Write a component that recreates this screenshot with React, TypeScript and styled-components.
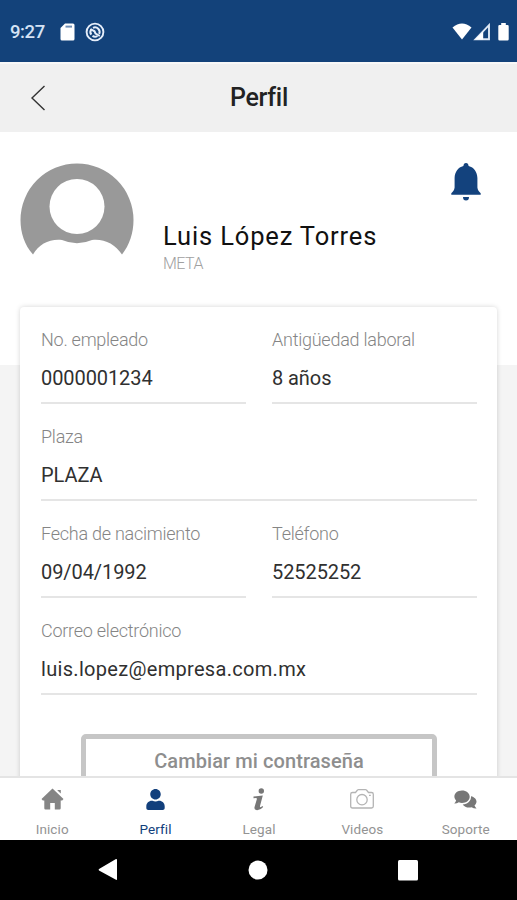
import React from "react";
import styled, { createGlobalStyle } from "styled-components";
import { FaUser } from "react-icons/fa";

const GlobalStyle = createGlobalStyle`
  * { box-sizing: border-box; }
  body { margin: 0; background: #fff; font-family: Roboto, "Liberation Sans", sans-serif; }
`;

const Screen = styled.div`
  width: 517px;
  height: 900px;
  display: flex;
  flex-direction: column;
  overflow: hidden;
  background: #fff;
`;

const StatusBar = styled.header`
  height: 62px;
  flex: none;
  display: flex;
  justify-content: space-between;
  align-items: center;
  padding: 1px 8px 0 10px;
  background: #13427a;
  color: #fff;
`;

const StatusGroup = styled.div`
  display: flex;
  align-items: center;
`;

const Clock = styled.span`
  width: 50px;
  font-size: 18.5px;
  font-weight: 500;
  letter-spacing: -0.4px;
  color: #d5e2f5;
`;

const TitleBar = styled.div`
  height: 70px;
  flex: none;
  display: grid;
  grid-template-columns: 100px 1fr 100px;
  align-items: center;
  background: #f0f0f0;
  border-top: 2px solid #f8f8f8;
`;

const BackButton = styled.button`
  display: flex;
  padding: 0 0 1px 30px;
  border: 0;
  background: none;
`;

const Title = styled.h1`
  margin: 0;
  padding-left: 1px;
  text-align: center;
  font-size: 25px;
  line-height: 30px;
  font-weight: 500;
  letter-spacing: -0.3px;
  color: #222;
`;

const Content = styled.main`
  height: 644px;
  flex: none;
  overflow: hidden;
  background: linear-gradient(#fff 233px, #f4f4f4 233px);
`;

const Identity = styled.section`
  height: 175px;
  display: grid;
  grid-template-columns: 143px 1fr auto;
  padding: 31px 36px 0 20px;
`;

const Person = styled.div`
  padding-top: 58px;
`;

const Name = styled.h2`
  margin: 0;
  font-size: 25.5px;
  line-height: 30px;
  font-weight: 400;
  letter-spacing: 0.85px;
  color: #111;
  white-space: nowrap;
`;

const Role = styled.p`
  margin: 3px 0 0;
  font-size: 16px;
  line-height: 20px;
  font-weight: 300;
  letter-spacing: -0.5px;
  color: #a0a0a0;
`;

const Card = styled.section`
  height: 520px;
  margin: 0 20px;
  padding: 19px 20px 0 21px;
  background: #fff;
  border-radius: 4px;
  box-shadow: 0 0 5px rgba(0, 0, 0, 0.17);
`;

const Fields = styled.div`
  display: grid;
  grid-template-columns: 205px 205px;
  justify-content: space-between;
`;

const Field = styled.div<{ $wide?: boolean }>`
  grid-column: ${({ $wide }) => ($wide ? "1 / -1" : "auto")};
  height: 78px;
  margin-bottom: 19px;
  border-bottom: 2px solid #e5e5e5;
`;

const Label = styled.div`
  padding-top: 2px;
  font-size: 18px;
  line-height: 24px;
  font-weight: 300;
  letter-spacing: -0.25px;
  color: #858585;
`;

const Value = styled.div<{ $spacing?: number }>`
  padding-top: 12px;
  font-size: 20px;
  line-height: 28px;
  letter-spacing: ${({ $spacing = -0.08 }) => $spacing}px;
  color: #303030;
`;

const PasswordButton = styled.button`
  display: block;
  width: 356px;
  height: 60px;
  margin: 20px 0 0 40px;
  padding: 0 0 7px;
  border: 5px solid #c6c6c6;
  border-radius: 5px;
  background: #fff;
  font: 500 20px Roboto, sans-serif;
  letter-spacing: 0.08px;
  color: #8e8e8e;
`;

const TabBar = styled.nav`
  height: 64px;
  flex: none;
  display: grid;
  grid-template-columns: repeat(5, 103.4px);
  border-top: 2px solid #e4e4e4;
  background: #fff;
`;

const Tab = styled.a<{ $active?: boolean }>`
  display: flex;
  flex-direction: column;
  align-items: center;
  padding: 8px 0 0 1px;
  font-size: 13.5px;
  line-height: 16px;
  letter-spacing: 0.1px;
  color: ${({ $active }) => ($active ? "#123f7c" : "#939393")};
`;

const TabIcon = styled.span`
  height: 26px;
  margin-bottom: 9px;
  display: flex;
  align-items: center;
`;

const SystemBar = styled.footer`
  height: 60px;
  flex: none;
  display: flex;
  justify-content: space-between;
  align-items: center;
  padding: 0 99px 0 98px;
  background: #000;
`;

const SdCard = () => (
  <svg width="15" height="18" viewBox="0 0 15 18">
    <path d="M5 .5H13Q14.500 .5 14.500 2V16Q14.500 17.500 13 17.500H2Q.5 17.500 .5 16V5Z" fill="#fff" />
    <path d="M5.500 3.600H12" stroke="#6f8eb5" strokeWidth="2" />
  </svg>
);

const SyncOff = () => (
  <svg width="20" height="20" viewBox="0 0 20 20" fill="none" stroke="#e6eefa">
    <circle cx="10" cy="10" r="8.400" strokeWidth="1.900" />
    <path d="M6.300 12.700A4.600 4.600 0 0 1 6.300 7.300M8 5.800A4.700 4.700 0 0 1 14.200 12M12.500 14A4.700 4.700 0 0 1 7.500 13.900" strokeWidth="2" />
    <path d="M5.500 7 9.500 9.300 10.500 11.500 14.800 14" strokeWidth="2" />
  </svg>
);

const Wifi = () => (
  <svg width="20" height="17" viewBox="0 0 20 17">
    <path d="M.5 4.500Q10-3.500 19.500 4.500L10 16.500Z" fill="#fff" />
  </svg>
);

const Signal = () => (
  <svg width="18" height="18" viewBox="0 0 18 18">
    <path d="M2.500 16.200H16V2.200Z" fill="none" stroke="#dfe8f4" strokeWidth="1.900" />
    <path d="M2 16.500 10.200 8.500V16.500Z" fill="#fff" />
  </svg>
);

const Battery = () => (
  <svg width="11" height="18" viewBox="0 0 11 18">
    <path d="M3.200 0H7.800V2H9.500Q10.700 2 10.700 3.200V16.200Q10.700 17.500 9.500 17.500H1.500Q.3 17.500 .3 16.200V3.200Q.3 2 1.500 2H3.200Z" fill="#fff" />
  </svg>
);

const Avatar = () => (
  <svg width="114" height="93" viewBox="0 0 114 93">
    <path
      d="M13 91.500C4.500 82 .5 70 .5 57A56.500 56.500 0 0 1 113.500 57C113.500 70 109.500 82 102 91.500C95 81 84 75.500 72 77Q57 83.500 42 77C30 75.500 19 81 13 91.500Z"
      fill="#999"
    />
    <circle cx="57" cy="43.500" r="27.500" fill="#fff" />
  </svg>
);

const Bell = () => (
  <svg width="30" height="38" viewBox="0 0 30 38">
    <path
      d="M15 0C13.400 0 12.600 1.200 12.400 3C7 4.400 3.800 9 3.600 15V24.500C3.400 27 2 28.500 .3 30.200V31.700H29.700V30.200C28 28.500 26.600 27 26.400 24.500V15C26.200 9 23 4.400 17.600 3C17.400 1.200 16.600 0 15 0Z"
      fill="#13427d"
    />
    <path d="M12 34H18Q18 37.500 15 37.500T12 34Z" fill="#13427d" />
  </svg>
);

const Home = () => (
  <svg width="23" height="22" viewBox="0 0 23 22" fill="#858585">
    <path d="M11.500 .5 22.500 11 21.200 12.400H19.700V20.300Q19.700 21.500 18.500 21.500H13.800V15H9.200V21.500H4.500Q3.300 21.500 3.300 20.300V12.400H1.800L.5 11Z" />
    <path d="M16.500 2H19.800V5.500L16.500 2.400Z" />
  </svg>
);

const Info = () => (
  <svg width="14" height="23" viewBox="0 0 14 23" fill="#777">
    <circle cx="9.300" cy="3" r="2.700" />
    <path d="M1.500 8.500 10.800 7.500 8 18Q7.700 19.500 9 19L10.500 18 11.200 19Q8.300 22.400 5 22.300Q1.600 22 2.700 18.500L4.900 11Q5.100 10 3.800 10L1.500 10.200Z" />
  </svg>
);

const Camera = () => (
  <svg width="24" height="20" viewBox="0 0 24 20" fill="none" stroke="#b4b4b4" strokeWidth="1.300">
    <path d="M2.500 3.500H5.500L7.500 1Q8 .7 8.500 .7H15.500Q16 .7 16.500 1L18.500 3.500H21.500Q23.300 3.500 23.300 5.300V17.200Q23.300 19 21.500 19H2.500Q.7 19 .7 17.200V5.300Q.7 3.500 2.500 3.500Z" />
    <circle cx="12" cy="10.700" r="5.200" />
    <path d="M19 6.300h1.800" />
  </svg>
);

const Chats = () => (
  <svg width="23" height="19" viewBox="0 0 23 19" fill="#777">
    <path d="M17 6.200C20.300 7 22.600 9.200 22.500 11.700C22.400 13.200 21.600 14.500 20.500 15.500Q21.200 17.200 22.500 18.500Q19.700 18.600 17.500 17.300C14 18.200 10.300 17 8.700 14.500C13.700 14.200 17.300 10.800 17 6.200Z" />
    <path d="M8 .5C12.300 .5 15.700 3.200 15.700 6.700S12.300 12.900 8 12.900Q6.300 12.900 4.800 12.300Q2.800 13.800 .3 13.600Q1.700 12.200 2.100 10.600C-1.900 6.300 1.500 .5 8 .5Z" />
  </svg>
);

interface FieldData {
  label: string;
  value: string;
  wide?: boolean;
  spacing?: number;
}

const fields: FieldData[] = [
  { label: "No. empleado", value: "0000001234" },
  { label: "Antigüedad laboral", value: "8 años" },
  { label: "Plaza", value: "PLAZA", wide: true },
  { label: "Fecha de nacimiento", value: "09/04/1992" },
  { label: "Teléfono", value: "52525252" },
  { label: "Correo electrónico", value: "luis.lopez@empresa.com.mx", wide: true, spacing: 0.31 },
];

const tabs = [
  { name: "Inicio", icon: <Home /> },
  { name: "Perfil", icon: <FaUser size={21} />, active: true },
  { name: "Legal", icon: <Info /> },
  { name: "Videos", icon: <Camera /> },
  { name: "Soporte", icon: <Chats /> },
];

const NotificationIcons = styled(StatusGroup)`
  gap: 10px;
`;

const ConnectionIcons = styled(StatusGroup)`
  gap: 1px;
  & > :last-child { margin-left: 6px; }
`;

export default function App() {
  return (
    <Screen>
      <GlobalStyle />
      <StatusBar>
        <StatusGroup>
          <Clock>9:27</Clock>
          <NotificationIcons>
            <SdCard />
            <SyncOff />
          </NotificationIcons>
        </StatusGroup>
        <ConnectionIcons>
          <Wifi />
          <Signal />
          <Battery />
        </ConnectionIcons>
      </StatusBar>
      <TitleBar>
        <BackButton aria-label="Volver">
          <svg width="16" height="26" viewBox="0 0 16 26" fill="none" stroke="#333" strokeWidth="1.400">
            <path d="M14.500 1 2 13 14.500 25" />
          </svg>
        </BackButton>
        <Title>Perfil</Title>
      </TitleBar>
      <Content>
        <Identity>
          <Avatar />
          <Person>
            <Name>Luis López Torres</Name>
            <Role>META</Role>
          </Person>
          <Bell />
        </Identity>
        <Card>
          <Fields>
            {fields.map((f) => (
              <Field key={f.label} $wide={f.wide}>
                <Label>{f.label}</Label>
                <Value $spacing={f.spacing}>{f.value}</Value>
              </Field>
            ))}
          </Fields>
          <PasswordButton>Cambiar mi contraseña</PasswordButton>
        </Card>
      </Content>
      <TabBar>
        {tabs.map((t) => (
          <Tab key={t.name} $active={t.active}>
            <TabIcon>{t.icon}</TabIcon>
            {t.name}
          </Tab>
        ))}
      </TabBar>
      <SystemBar>
        <svg width="20" height="24" viewBox="0 0 20 24"><path d="M1 11 18 1Q19 .7 19 2V21Q19 22.300 18 21.700L1 12.500Q.2 11.700 1 11Z" fill="#fff" /></svg>
        <svg width="20" height="20" viewBox="0 0 20 20"><circle cx="10" cy="10" r="9.500" fill="#fff" /></svg>
        <svg width="20" height="21" viewBox="0 0 20 21"><rect width="20" height="20.500" rx="1.500" fill="#fff" /></svg>
      </SystemBar>
    </Screen>
  );
}
